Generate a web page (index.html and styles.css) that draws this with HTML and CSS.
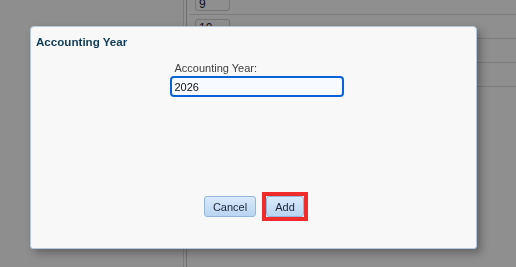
FILE: index.html
```html
<!DOCTYPE html>
<html lang="en">
<head>
  <meta charset="UTF-8">
  <meta name="viewport" content="width=device-width, initial-scale=1.0">
  <title>Accounting Year</title>
  <link rel="stylesheet" href="styles.css">
</head>
<body>
  <div class="app">
    <div class="side"></div>
    <div class="divider"></div>
    <div class="rows">
      <div class="row"><span class="cell">9</span></div>
      <div class="row"><span class="cell">10</span></div>
      <div class="row"></div>
      <div class="row"></div>
    </div>
  </div>

  <div class="mask"></div>

  <div class="dialog">
    <h1 class="dialog-title">Accounting Year</h1>
    <div class="dialog-body">
      <label class="field">
        <span class="field-label">Accounting Year:</span>
        <input class="field-input" type="text" value="2026">
      </label>
    </div>
    <div class="dialog-buttons">
      <button class="btn">Cancel</button>
      <span class="highlight"><button class="btn btn-add">Add</button></span>
    </div>
  </div>
</body>
</html>
```

FILE: styles.css
```css
body {
  margin: 0;
  font-family: "Liberation Sans", Arial, sans-serif;
  font-size: 11px;
  overflow: hidden;
  background: #fff;
}

/* page behind the popup */
.app {
  display: flex;
  height: 267px;
}
.side {
  width: 183px;
  background: #fdfdfd;
}
.divider {
  width: 2px;
  border-left: 1px solid #dcdcdc;
  border-right: 1px solid #c4c4c4;
}
.rows {
  flex: 1;
  margin-top: -9px;
  padding-left: 3px;
  background: #ffffff;
}
.row {
  height: 24px;
  border-bottom: 1px solid #dedede;
  padding: 4px 0 0 5px;
  box-sizing: border-box;
}
.cell {
  display: block;
  width: 35px;
  height: 16px;
  box-sizing: border-box;
  border: 1px solid #d0d0d0;
  border-radius: 3px;
  padding: 0 3px;
  font-size: 12px;
  line-height: 17px;
  color: #1a1a3a;
}

.mask {
  position: fixed;
  inset: 0;
  background: rgba(0, 0, 0, 0.44);
}

/* popup */
.dialog {
  position: absolute;
  left: 30px;
  top: 26px;
  width: 447px;
  height: 223px;
  box-sizing: border-box;
  display: flex;
  flex-direction: column;
  background: #f8f8f8;
  border: 1px solid #b7c8dd;
  border-radius: 4px 4px 3px 3px;
  box-shadow: 4px 4px 8px rgba(0, 0, 0, 0.3);
}
.dialog-title {
  margin: 0;
  padding: 7px 5px 0;
  font-size: 11.6px;
  line-height: 15px;
  font-weight: bold;
  color: #0f3b58;
}
.dialog-body {
  flex: 1;
  display: flex;
  justify-content: center;
  padding: 13px 0 0 6px;
}
.field {
  display: flex;
  flex-direction: column;
  width: 174px;
}
.field-label {
  padding-left: 5px;
  line-height: 13px;
  margin-bottom: 1px;
  color: #404040;
}
.field-input {
  height: 21px;
  box-sizing: border-box;
  border: 2px solid #0a62d9;
  border-radius: 4px;
  padding: 0 3px;
  background: #f7fbff;
  font: 11px "Liberation Sans", Arial, sans-serif;
  color: #111;
  outline: none;
}

.dialog-buttons {
  display: flex;
  justify-content: center;
  align-items: center;
  gap: 6px;
  padding: 0 0 31px 5px;
}
.btn {
  height: 21px;
  width: 52px;
  padding: 0;
  border: 1px solid #93b6dc;
  border-radius: 3px;
  background: linear-gradient(to bottom, #d9eafb, #b9d5f2);
  font: 11px "Liberation Sans", Arial, sans-serif;
  color: #1d2535;
}
.btn-add {
  width: 38px;
}
.highlight {
  display: flex;
  border: 4px solid #f02b2b;
  margin: -4px 0;
}
```
